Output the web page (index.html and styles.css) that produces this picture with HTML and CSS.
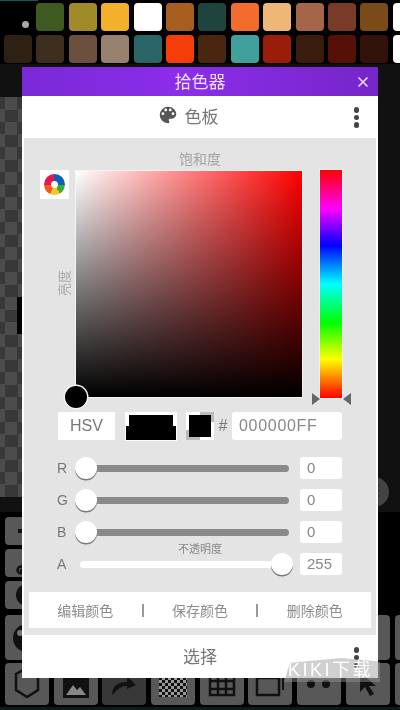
FILE: index.html
```html
<!DOCTYPE html>
<html lang="en">
<head>
	<meta charset="UTF-8">
	<title>拾色器</title>
	<link rel="stylesheet" href="styles.css">
</head>
<body>
	<div id="screen">
		<!-- 背后的应用界面 -->
		<div class="top-line"></div>
		<div class="palette">
			<div class="dot-cell"><span></span></div>
			<i style="background:#3f5a20"></i><i style="background:#a08a2a"></i><i style="background:#f3b02a"></i><i style="background:#fff"></i><i style="background:#a85e1e"></i><i style="background:#1f443e"></i><i style="background:#f26c2e"></i><i style="background:#efb775"></i><i style="background:#a5654a"></i><i style="background:#7a3a28"></i><i style="background:#7a4a18"></i><i style="background:#fff"></i>
			<i style="background:#2e2012"></i><i style="background:#3e2e1e"></i><i style="background:#6b5040"></i><i style="background:#96826e"></i><i style="background:#2a6668"></i><i style="background:#f53d0a"></i><i style="background:#4a2510"></i><i style="background:#3fa09c"></i><i style="background:#9a1c0a"></i><i style="background:#3a1c0e"></i><i style="background:#561008"></i><i style="background:#34120c"></i><i style="background:#fff"></i>
		</div>
		<div class="stage">
			<div class="checker"><div class="layer-bar"></div></div>
			<div class="round-btn"></div>
		</div>
		<div class="tools">
			<div class="tool-stack">
				<div class="tool small"><svg width="22" height="22" viewBox="0 0 22 22"><path d="M11 2v18M2 11h18" stroke="#111" stroke-width="4"/></svg></div>
				<div class="tool small"><svg width="22" height="24" viewBox="0 0 22 24"><path d="M4 20c3 0 4-2 5-5s4-5 9-9" stroke="#111" stroke-width="3.5" fill="none"/><circle cx="5" cy="19" r="3.5" fill="none" stroke="#111" stroke-width="2.5"/></svg></div>
				<div class="tool small"><svg width="24" height="24" viewBox="0 0 24 24"><circle cx="12" cy="12" r="11" fill="#111"/><text x="12" y="18" text-anchor="middle" class="q-mark">?</text></svg></div>
			</div>
			<div class="tool-row">
				<div class="tool"><svg width="30" height="30" viewBox="0 0 30 30"><circle cx="15" cy="15" r="14" fill="#111"/><circle cx="8" cy="10" r="3" fill="#777"/></svg></div>
				<div class="tool"></div><div class="tool"></div><div class="tool"></div><div class="tool"></div><div class="tool"></div><div class="tool"></div><div class="tool"></div><div class="tool"></div>
			</div>
			<div class="tool-row low">
				<div class="tool"><svg width="26" height="36" viewBox="0 0 26 36"><path d="M2 8 13 2l11 6v16l-11 7-11-7z" fill="none" stroke="#111" stroke-width="2.5"/></svg></div>
				<div class="tool"><svg width="30" height="32" viewBox="0 0 30 32"><path d="M2 2h26v28H2z" fill="#111"/><path d="M5 27l7-10 4 5 3-3 6 8z" fill="#888"/></svg></div>
				<div class="tool dim"><svg width="30" height="26" viewBox="0 0 30 26"><path d="M3 24c0-9 6-13 15-13V5l9 9-9 4v-3c-6 0-9 3-15 9z" fill="#111"/></svg></div>
				<div class="tool"><div class="mini-checker"></div></div>
				<div class="tool"><svg width="28" height="26" viewBox="0 0 28 26"><path d="M2 2h24v22H2zM10 2v22M18 2v22M2 10h24M2 18h24" fill="none" stroke="#111" stroke-width="2.5"/></svg></div>
				<div class="tool"><svg width="30" height="26" viewBox="0 0 30 26"><path d="M2 7h22v17H2z" fill="none" stroke="#111" stroke-width="2.5"/><path d="M6 3h22v16" fill="none" stroke="#111" stroke-width="2"/></svg></div>
				<div class="tool"><svg width="30" height="12" viewBox="0 0 30 12"><circle cx="7" cy="6" r="4" fill="#111"/><circle cx="22" cy="6" r="4" fill="#111"/></svg></div>
				<div class="tool"><svg width="24" height="28" viewBox="0 0 24 28"><path d="M4 2v20l5-5 5 9 4-2-5-8h7z" fill="#111"/></svg></div>
				<div class="tool"></div>
			</div>
		</div>
		<div class="bottom-line"></div>

		<!-- 拾色器弹窗 -->
		<div class="dialog">
			<div class="dialog-title">
				<span>拾色器</span>
				<svg class="close" width="12" height="12" viewBox="0 0 12 12"><path d="M1.5 1.5l9 9M10.5 1.5l-9 9" stroke="#eadcfb" stroke-width="1.6"/></svg>
			</div>
			<div class="tab-head">
				<svg width="22" height="22" viewBox="0 0 24 24"><path fill="#555" d="M12 3a9 9 0 0 0 0 18c.83 0 1.5-.67 1.5-1.5 0-.39-.15-.74-.39-1.01-.23-.26-.38-.61-.38-.99 0-.83.67-1.5 1.5-1.5H16c2.76 0 5-2.24 5-5 0-4.42-4.03-8-9-8zm-5.5 9c-.83 0-1.5-.67-1.5-1.5S5.67 9 6.5 9 8 9.67 8 10.5 7.33 12 6.5 12zm3-4C8.67 8 8 7.33 8 6.5S8.67 5 9.5 5s1.5.67 1.5 1.5S10.33 8 9.5 8zm5 0c-.83 0-1.5-.67-1.5-1.5S13.67 5 14.5 5s1.5.67 1.5 1.5S15.33 8 14.5 8zm3 4c-.83 0-1.5-.67-1.5-1.5S16.67 9 17.5 9s1.5.67 1.5 1.5-.67 1.5-1.5 1.5z"/></svg>
				<span>色板</span>
				<div class="more"><b></b><b></b><b></b></div>
			</div>
			<div class="dialog-body">
				<div class="sat-label">饱和度</div>
				<div class="picker">
					<div class="picker-left">
						<div class="wheel-btn"><div class="wheel"></div></div>
						<div class="val-label">亮度</div>
					</div>
					<div class="sv-box"><div class="sv-thumb"></div></div>
					<div class="hue-bar"><span class="arrow-l"></span><span class="arrow-r"></span></div>
				</div>
				<div class="color-row">
					<div class="mode-btn">HSV</div>
					<div class="old-new"><span class="top-part"></span><span class="bottom-part"></span></div>
					<div class="alpha-swatch"><span></span></div>
					<div class="hash">#</div>
					<div class="hex-input">000000FF</div>
				</div>
				<div class="sliders">
					<div class="slider-row">
						<label>R</label>
						<div class="track"><span class="thumb"></span></div>
						<div class="num">0</div>
					</div>
					<div class="slider-row">
						<label>G</label>
						<div class="track"><span class="thumb"></span></div>
						<div class="num">0</div>
					</div>
					<div class="slider-row">
						<label>B</label>
						<div class="track"><span class="thumb"></span></div>
						<div class="num">0</div>
					</div>
					<div class="alpha-label">不透明度</div>
					<div class="slider-row">
						<label>A</label>
						<div class="track alpha"><span class="thumb end"></span></div>
						<div class="num">255</div>
					</div>
				</div>
				<div class="actions">
					<a>编辑颜色</a><em></em><a>保存颜色</a><em></em><a>删除颜色</a>
				</div>
			</div>
			<div class="dialog-foot">
				<span>选择</span>
				<div class="more"><b></b><b></b><b></b></div>
			</div>
		</div>

		<!-- 水印 -->
		<div class="watermark">KIKI下载</div>
	</div>
</body>
</html>
```

FILE: styles.css
```css
html, body {
	margin: 0;
	padding: 0;
	background: #000;
}
#screen {
	position: relative;
	width: 400px;
	height: 710px;
	overflow: hidden;
	background: #000;
	font-family: "Liberation Sans", "Noto Sans CJK SC", sans-serif;
	filter: blur(.4px);
}
.top-line {
	width: 38px;
	height: 1px;
	background: #0b5a55;
}
.palette {
	display: grid;
	grid-template-columns: repeat(13, 28px);
	grid-auto-rows: 28px;
	gap: 4px 4.4px;
	padding: 2px 0 0 4px;
	height: 62px;
	box-sizing: border-box;
	width: 440px;
}
.palette i {
	display: block;
	border-radius: 4px;
}
.dot-cell {
	display: flex;
	align-items: center;
	justify-content: center;
	padding: 14px 0 0 14px;
	box-sizing: border-box;
}
.dot-cell span {
	width: 7px;
	height: 7px;
	border-radius: 50%;
	background: #aaa;
}
.stage {
	position: relative;
	margin-top: 1px;
	height: 448px;
	padding: 33px 0 15px;
	box-sizing: border-box;
	background: #111;
}
.checker {
	position: relative;
	width: 22px;
	height: 400px;
	background: repeating-conic-gradient(#383838 0 25%, #4c4c4c 0 50%) 5px 0 / 25px 25px;
}
.layer-bar {
	position: absolute;
	left: 17px;
	top: 200px;
	width: 5px;
	height: 37px;
	background: #000;
}
.round-btn {
	position: absolute;
	left: 359px;
	top: 413px;
	width: 30px;
	height: 30px;
	border-radius: 50%;
	background: #444;
}
.round-btn::after {
	content: "";
	position: absolute;
	left: 19px;
	top: 8px;
	width: 2px;
	height: 2px;
	background: #335;
	box-shadow: 0 5px 0 #335, 0 10px 0 #622;
}
.tools {
	display: flex;
	flex-direction: column;
	gap: 3px;
	padding: 5px 0 0 5px;
}
.tool-stack {
	display: flex;
	flex-direction: column;
	gap: 4px;
	margin-bottom: 3px;
}
.tool-row {
	display: flex;
	gap: 4.7px;
	height: 45px;
}
.tool-row.low {
	height: 42px;
}
.tool {
	flex: none;
	display: flex;
	align-items: center;
	justify-content: center;
	width: 44px;
	border-radius: 4px;
	background: #585858;
}
.tool.small {
	height: 28px;
}
.tool.dim {
	background: #383838;
}
.q-mark {
	font: bold 17px "Liberation Sans", sans-serif;
	fill: #666;
}
.mini-checker {
	width: 28px;
	height: 26px;
	background: repeating-conic-gradient(#999 0 25%, #111 0 50%) 0 0 / 6px 6px;
}
.bottom-line {
	position: absolute;
	left: 0;
	right: 0;
	bottom: 0;
	height: 3px;
	background: #0a1d1c;
}

/* 弹窗 */
.dialog {
	position: absolute;
	left: 22px;
	top: 67px;
	width: 356px;
	height: 611px;
	background: #fff;
	color: #888;
}
.dialog-title {
	position: relative;
	height: 29px;
	padding-bottom: 2px;
	box-sizing: border-box;
	display: flex;
	align-items: center;
	justify-content: center;
	background: linear-gradient(to right, #7a29d6, #8c2dea 45%, #7625c8);
	color: #ece0fb;
	font-size: 17px;
}
.close {
	position: absolute;
	right: 9px;
	top: 9px;
}
.tab-head {
	position: relative;
	height: 42px;
	padding: 0 25px 4px 0;
	box-sizing: border-box;
	display: flex;
	align-items: center;
	justify-content: center;
	gap: 6px;
	font-size: 17px;
	color: #777;
}
.more {
	position: absolute;
	right: 19px;
	top: 11px;
	display: flex;
	flex-direction: column;
	gap: 2px;
}
.more b {
	width: 5.5px;
	height: 5.5px;
	border-radius: 50%;
	background: #444;
}
.dialog-body {
	margin: 0 2px;
	height: 497px;
	padding-top: 12px;
	box-sizing: border-box;
	background: #e4e4e4;
}
.sat-label {
	height: 20px;
	line-height: 19px;
	text-align: center;
	font-size: 14px;
	color: #a2a2a2;
}
.picker {
	display: flex;
	padding-left: 16px;
	height: 228px;
}
.picker-left {
	width: 29px;
	margin-right: 6px;
	display: flex;
	flex-direction: column;
	align-items: flex-end;
}
.wheel-btn {
	width: 29px;
	height: 29px;
	flex: none;
	display: flex;
	align-items: center;
	justify-content: center;
	background: #fff;
}
.wheel {
	position: relative;
	width: 21px;
	height: 21px;
	border-radius: 50%;
	background: conic-gradient(#0b5fb5 0 95deg, #43a83c 95deg 150deg, #f9c322 150deg 205deg, #f25a1a 205deg 270deg, #e5194f 270deg 360deg);
}
.wheel::after {
	content: "";
	position: absolute;
	left: 7px;
	top: 7px;
	width: 7px;
	height: 7px;
	border-radius: 50%;
	background: #fff;
}
.val-label {
	margin: 71px -3px 0 0;
	writing-mode: vertical-rl;
	text-orientation: sideways;
	transform: rotate(180deg);
	font-size: 13px;
	line-height: 14px;
	color: #a8a8a8;
}
.sv-box {
	position: relative;
	width: 228px;
	height: 228px;
	box-sizing: border-box;
	border: 1px solid #f4f4f4;
	background: linear-gradient(to top, #000, transparent), linear-gradient(to right, #fff, #f00);
}
.sv-thumb {
	position: absolute;
	left: -11px;
	bottom: -11px;
	width: 22px;
	height: 22px;
	box-sizing: border-box;
	border-radius: 50%;
	background: #000;
	box-shadow: 0 0 0 1.5px #f4f4f4;
}
.hue-bar {
	position: relative;
	margin-left: 17px;
	width: 22px;
	height: 228px;
	background: linear-gradient(to bottom, #f00, #f0f 17%, #00f 33%, #0ff 50%, #0f0 67%, #ff0 83%, #f00);
	box-shadow: 0 0 0 1px #eef4f4;
}
.arrow-l, .arrow-r {
	position: absolute;
	bottom: -7px;
	width: 0;
	height: 0;
	border-top: 6px solid transparent;
	border-bottom: 6px solid transparent;
}
.arrow-l {
	left: -8px;
	border-left: 8px solid #666;
}
.arrow-r {
	right: -9px;
	border-right: 8px solid #666;
}
.color-row {
	display: flex;
	margin-top: 14px;
	padding-left: 34px;
	height: 29px;
}
.mode-btn {
	width: 57px;
	height: 28px;
	line-height: 28px;
	text-align: center;
	background: #fff;
	font-size: 16px;
	color: #777;
}
.old-new {
	margin-left: 10px;
	width: 52px;
	height: 29px;
	padding-top: 3px;
	box-sizing: border-box;
	display: flex;
	flex-direction: column;
	align-items: center;
	background: #fff;
}
.top-part {
	width: 44px;
	height: 11px;
	background: #000;
}
.bottom-part {
	width: 50px;
	height: 14px;
	background: #000;
}
.alpha-swatch {
	margin-left: 9px;
	width: 28px;
	height: 28px;
	padding: 3px;
	box-sizing: border-box;
	background: linear-gradient(#bbb, #bbb) right top / 14px 10px no-repeat, linear-gradient(#bbb, #bbb) left bottom / 14px 10px no-repeat, #fff;
}
.alpha-swatch span {
	display: block;
	height: 22px;
	background: #000;
}
.hash {
	width: 18px;
	line-height: 28px;
	text-align: center;
	font-size: 16px;
	color: #777;
}
.hex-input {
	width: 110px;
	height: 28px;
	line-height: 28px;
	padding-left: 7px;
	box-sizing: border-box;
	border-radius: 3px;
	background: #fff;
	font-size: 16px;
	letter-spacing: .7px;
	color: #888;
}
.sliders {
	margin-top: 16px;
}
.slider-row {
	display: flex;
	align-items: center;
	height: 22px;
	margin-bottom: 10px;
	padding-left: 33px;
}
.slider-row label {
	width: 23px;
	font-size: 14px;
	color: #777;
}
.track {
	position: relative;
	width: 209px;
	height: 7px;
	border-radius: 4px;
	background: #8a8a8a;
}
.track.alpha {
	background: #fff;
}
.thumb {
	position: absolute;
	left: -5px;
	top: -8px;
	width: 22px;
	height: 22px;
	border-radius: 50%;
	background: #fff;
	box-shadow: 0 1.5px 0 #777;
}
.thumb.end {
	left: auto;
	right: -4px;
}
.num {
	margin-left: 11px;
	width: 42px;
	height: 22px;
	line-height: 22px;
	padding-left: 7px;
	box-sizing: border-box;
	border-radius: 3px;
	background: #fff;
	font-size: 15px;
	color: #888;
}
.alpha-label {
	height: 10px;
	margin-top: -10px;
	line-height: 12px;
	text-align: center;
	font-size: 11px;
	color: #888;
}
.actions {
	display: flex;
	align-items: center;
	margin: 17px 5px 0;
	height: 36px;
	background: #fff;
	font-size: 14px;
	color: #8c8c8c;
}
.actions a {
	flex: 1;
	text-align: center;
}
.actions em {
	width: 2px;
	height: 13px;
	background: #999;
}
.dialog-foot {
	position: relative;
	height: 43px;
	padding-bottom: 3px;
	box-sizing: border-box;
	display: flex;
	align-items: center;
	justify-content: center;
	font-size: 17px;
	color: #777;
}
.dialog-foot .more {
	top: 12px;
}
.watermark {
	position: absolute;
	left: 284px;
	top: 658px;
	width: 96px;
	height: 24px;
	padding-left: 4px;
	box-sizing: border-box;
	line-height: 24px;
	background: rgba(150, 150, 150, .45);
	clip-path: polygon(6% 20%, 60% 0, 100% 15%, 100% 100%, 0 100%);
	color: #fff;
	font-size: 18px;
	letter-spacing: 2.5px;
}
```
